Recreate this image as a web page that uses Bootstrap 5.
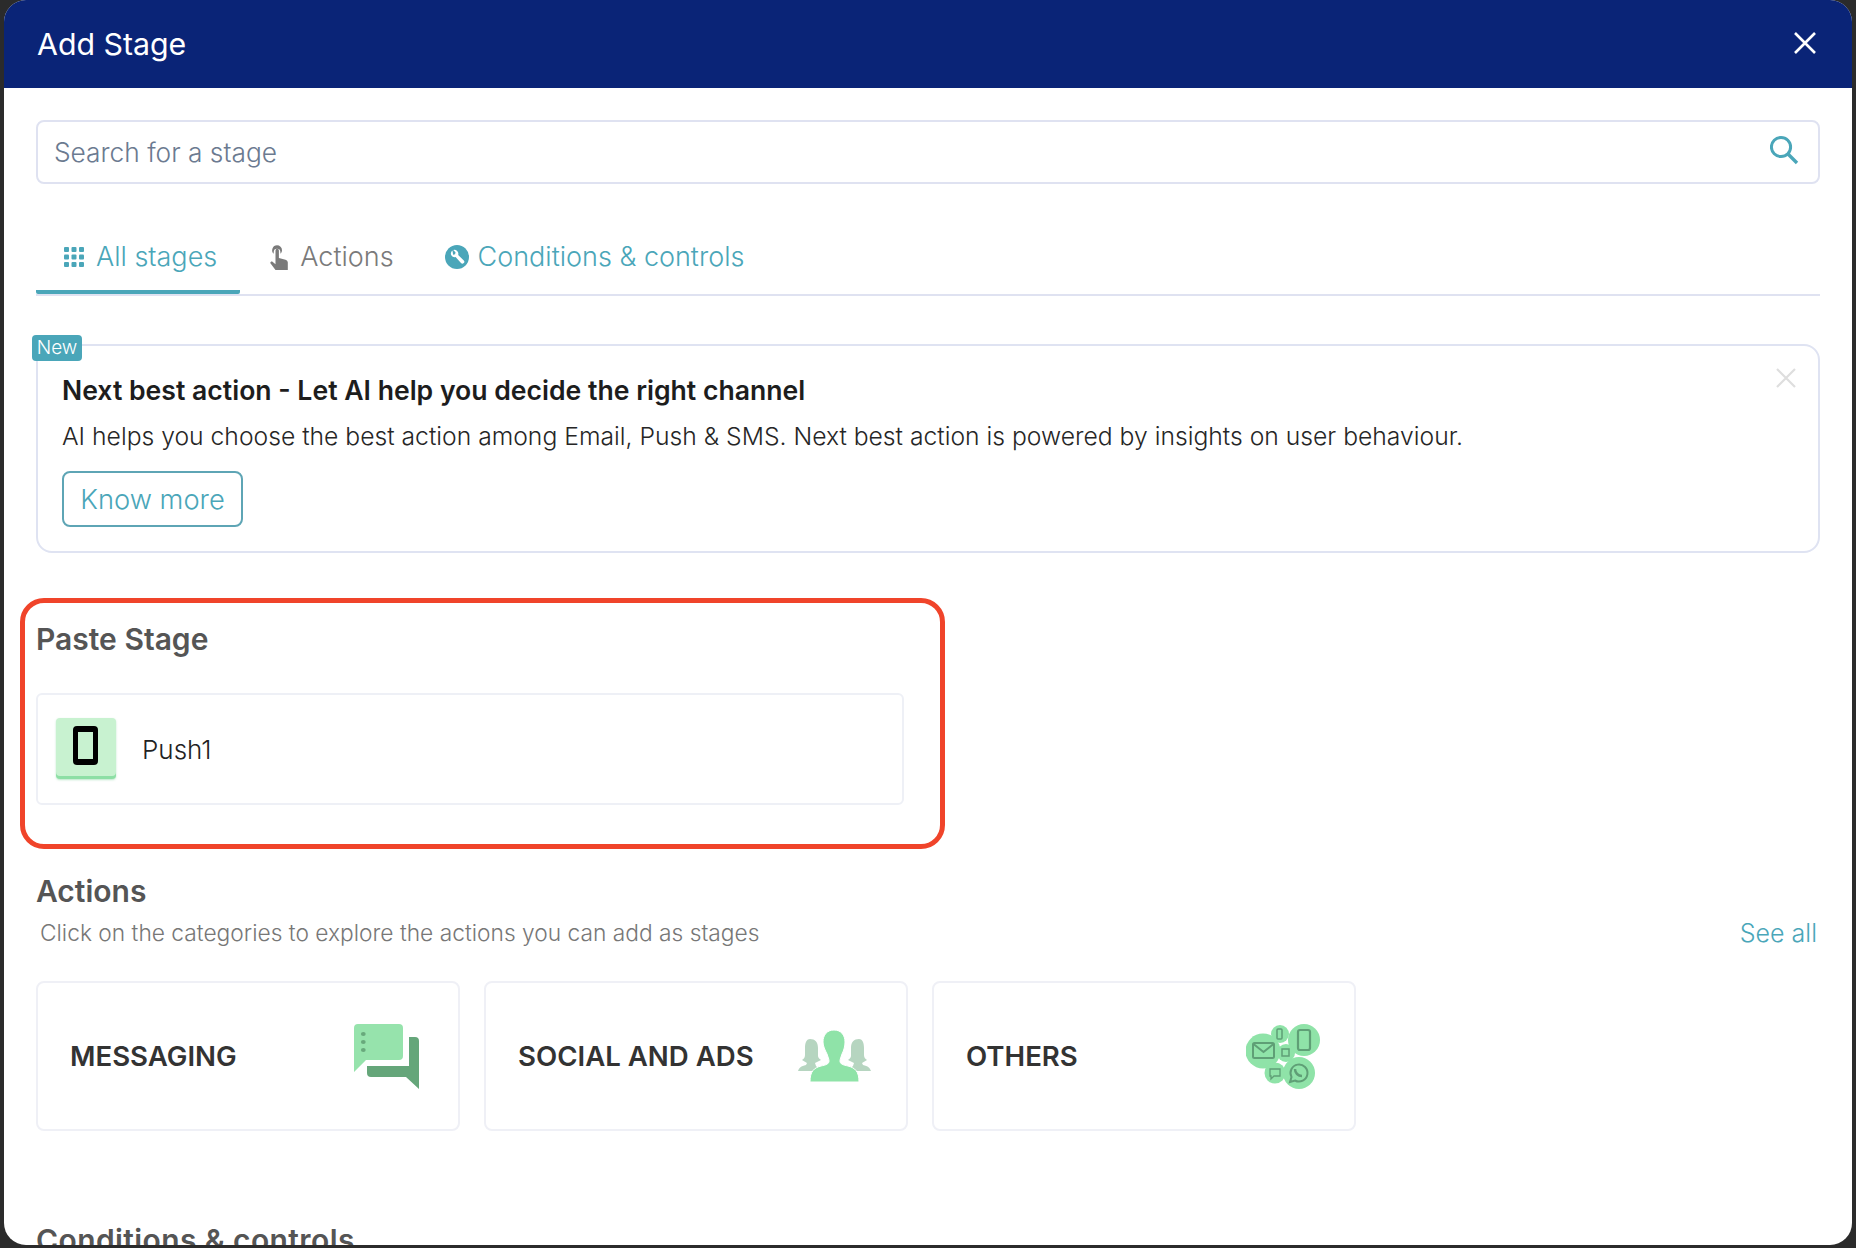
<!DOCTYPE html>
<html lang="en">
<head>
<meta charset="utf-8">
<title>Add Stage</title>
<link href="https://cdn.jsdelivr.net/npm/bootstrap@5.3.0/dist/css/bootstrap.min.css" rel="stylesheet">
<style>
html,body{height:100%}
body{background:#2b2b2b;font-family:"Inter","Liberation Sans",sans-serif;overflow:hidden}
.stage-window{height:1245px;margin:0 4px;background:#fff;border-radius:22px;overflow:hidden}
.stage-head{height:88px;background:#0a2477;color:#fff;padding:0 34px 0 33px}
.stage-head h1{font-size:30.300px;font-weight:400;margin:0}
.stage-close{width:24px;height:24px;padding:0;border:0;background:none;color:#fff;line-height:0;margin:-3px 1px 0 0}
.stage-main{padding:32px 32px 0}
.stage-search{height:64px;border:2px solid #dfe2f1;border-radius:8px;padding:0 18px 0 16px}
.stage-search input{border:0;outline:0;flex:1;font-size:26.300px;font-weight:300;color:#6b7a90;background:none;padding:2px 0 0;font-family:inherit}
.stage-search input::placeholder{color:#6b7a90;opacity:1}
.stage-tabs{margin-top:48px;height:62px;border-bottom:2px solid #dfe2f1;box-sizing:content-box}
.stage-tab{height:62px;display:flex;align-items:center;gap:12px;font-size:27px;font-weight:300;color:#4aa6b9;padding:0 23px 8px 28px;text-decoration:none;border-bottom:4px solid transparent;border-radius:0 0 2px 2px}
.stage-tab.is-on{border-bottom-color:#4aa6b9}
.stage-tab.is-grey{color:#7a7a7a;padding-left:30px;padding-right:30px;gap:12px}
.stage-tab.is-cond{padding-left:21px;gap:9px}
.promo{margin-top:48px;height:209px;border:2px solid #dfe3f2;border-radius:16px;padding:26px 24px 0;position:relative}
.promo-flag{position:absolute;left:-6px;top:-11px;width:50px;height:26px;background:#4aa6b9;color:#fff;font-size:19px;font-weight:300;line-height:26px;text-align:center;border-radius:4px}
.promo-title{font-size:26.600px;font-weight:600;color:#1d1d1d;line-height:36px;margin:0 0 10px}
.promo-text{font-size:24.700px;font-weight:300;color:#262626;line-height:36px;margin:0 0 17px}
.promo-btn{height:56px;width:181px;font-size:27.300px;font-weight:300;color:#4aa6b9;border:2px solid #5ea5b5;border-radius:8px;background:#fff;padding:2px 0 0;font-family:inherit}
.promo-x{position:absolute;right:22px;top:22px;line-height:0}
.paste-zone{margin:45px 0 0 -16px;width:925px;height:251px;border:5px solid #f0442a;border-radius:24px;padding:18px 36px 0 11px}
.zone-title{font-size:30px;font-weight:600;color:#555;line-height:36px;margin:0}
.push-row{margin-top:36px;height:112px;border:2px solid #eef0f6;border-radius:6px;padding:0 18px;gap:26px;font-size:26px;font-weight:300;color:#222}
.push-tile{width:60px;height:61px;background:#c8f2d0;border-radius:4px;box-shadow:inset 0 -3px 0 #8ddfa5,0 1px 2px rgba(120,210,150,.5);margin-top:-1px}
.push-phone{width:25px;height:39px;border:5px solid #000;border-width:6px 5px;border-radius:4px;background:#c8f2d0;margin-top:-6px;margin-left:-2px}
.sect-title{margin-top:24px}
.sect-sub{margin-top:9px;padding:0 3px 0 4px;line-height:30px}
.sect-note{font-size:22.750px;font-weight:300;color:#777}
.sect-all{font-size:25px;font-weight:300;color:#4aa6b9;text-decoration:none}
.cat-row{margin-top:33px;gap:24px}
.cat-box{width:424px;height:150px;border:2px solid #eff0f6;border-radius:8px;padding:0 32px}
.cat-name{font-size:27.600px;font-weight:600;color:#333;padding-top:2px}
.ico-a{margin-right:7px}.ico-b{margin-right:3px}.ico-c{margin-right:2px}
.last-title{margin-top:91px;letter-spacing:.4px}
</style>
</head>
<body>
<div class="stage-window d-flex flex-column">
  <header class="stage-head d-flex align-items-center justify-content-between flex-shrink-0">
    <h1>Add Stage</h1>
    <button class="stage-close" type="button" aria-label="Close"><svg width="24" height="24" viewBox="0 0 24 24"><path d="M2 2l20 20M22 2L2 22" stroke="#fff" stroke-width="2.600" fill="none"/></svg></button>
  </header>
  <main class="stage-main">
    <div class="stage-search d-flex align-items-center">
      <input type="text" placeholder="Search for a stage" aria-label="Search for a stage">
      <svg class="mb-1" width="30" height="30" viewBox="0 0 30 30"><circle cx="11" cy="12" r="9.600" fill="none" stroke="#4aa6b9" stroke-width="3"/><path d="M18 19l9 9" stroke="#4aa6b9" stroke-width="3.400" fill="none"/></svg>
    </div>

    <nav class="stage-tabs d-flex">
      <a class="stage-tab is-on" href="#">
        <svg width="20" height="20" viewBox="0 0 20 20" fill="#4aa6b9"><rect x="0" y="0" width="5" height="5" rx="1"/><rect x="7.500" y="0" width="5" height="5" rx="1"/><rect x="15" y="0" width="5" height="5" rx="1"/><rect x="0" y="7.500" width="5" height="5" rx="1"/><rect x="7.500" y="7.500" width="5" height="5" rx="1"/><rect x="15" y="7.500" width="5" height="5" rx="1"/><rect x="0" y="15" width="5" height="5" rx="1"/><rect x="7.500" y="15" width="5" height="5" rx="1"/><rect x="15" y="15" width="5" height="5" rx="1"/></svg>
        All stages</a>
      <a class="stage-tab is-grey" href="#">
        <svg width="18" height="26" viewBox="0 0 18 26" fill="#7a7a7a"><path d="M7 1.200a5 5 0 0 1 5 5c0 1.500-.6 2.700-1.600 3.600V8.200a3.300 3.300 0 1 0-6.700 0v1.600A5 5 0 0 1 7 1.200z"/><path d="M5.500 6.500a1.700 1.700 0 0 1 3.400 0V14l6.600 1.700c1.400.4 2.300 1.500 2.300 2.900V26H5.500L.6 19.500c-.9-1.200.7-2.700 1.900-1.700l3 2.400z"/></svg>
        Actions</a>
      <a class="stage-tab is-cond" href="#">
        <svg width="24" height="24" viewBox="0 0 24 24"><circle cx="12" cy="12" r="12" fill="#4aa6b9"/><path d="M7.500 5.500a4 4 0 0 0-1.200 4.800 4 4 0 0 0 4.300 1.800l5.400 5.900a1.900 1.900 0 0 0 2.800-2.600l-5.600-5.500a4 4 0 0 0-5-4.900l2.300 2.300-.4 2-2 .5z" fill="#fff"/></svg>
        Conditions &amp; controls</a>
    </nav>

    <section class="promo">
      <span class="promo-flag">New</span>
      <span class="promo-x"><svg width="20" height="20" viewBox="0 0 20 20"><path d="M1 1l18 18M19 1L1 19" stroke="#dedede" stroke-width="2.200" fill="none"/></svg></span>
      <h2 class="promo-title">Next best action - Let AI help you decide the right channel</h2>
      <p class="promo-text">AI helps you choose the best action among Email, Push &amp; SMS. Next best action is powered by insights on user behaviour.</p>
      <button class="promo-btn" type="button">Know more</button>
    </section>

    <section class="paste-zone">
      <h3 class="zone-title">Paste Stage</h3>
      <div class="push-row d-flex align-items-center">
        <div class="push-tile d-flex align-items-center justify-content-center"><div class="push-phone"></div></div>
        <span>Push1</span>
      </div>
    </section>

    <h3 class="zone-title sect-title">Actions</h3>
    <div class="sect-sub d-flex justify-content-between align-items-center">
      <span class="sect-note">Click on the categories to explore the actions you can add as stages</span>
      <a class="sect-all" href="#">See all</a>
    </div>

    <div class="cat-row d-flex">
      <div class="cat-box d-flex align-items-center justify-content-between">
        <span class="cat-name">MESSAGING</span>
        <svg class="ico-a" width="65" height="65" viewBox="0 0 65 65"><path d="M55 13h6a4 4 0 0 1 4 4v48L52 53H17a4 4 0 0 1-4-4v-7h42z" fill="#65a67a"/><path d="M4 0h41a4 4 0 0 1 4 4v28a4 4 0 0 1-4 4H12L0 48V4a4 4 0 0 1 4-4z" fill="#96e3ac"/><g fill="#68a97c"><ellipse cx="9.300" cy="10" rx="2.400" ry="2"/><ellipse cx="9.300" cy="18" rx="2.400" ry="2"/><ellipse cx="9.300" cy="26" rx="2.400" ry="2"/></g></svg>
      </div>
      <div class="cat-box d-flex align-items-center justify-content-between">
        <span class="cat-name">SOCIAL AND ADS</span>
        <svg class="ico-b" width="73" height="52" viewBox="0 0 73 52"><g fill="#b6d5c0"><path d="M12 9c5 0 8 3 8 9v8c0 2 2 3 3 4l-6 3 1 3 5 5H0c1-3 3-5 8-6l1-2-5-3c2-1 3-3 3-5v-7c0-6 2-9 5-9z"/><path d="M61 9c-5 0-8 3-8 9v8c0 2-2 3-3 4l6 3-1 3-5 5h23c-1-3-3-5-8-6l-1-2 5-3c-2-1-3-3-3-5v-7c0-6-2-9-5-9z"/></g><path d="M36 0c7 0 11 5 11 12 0 4-1 8-3 12-1 3-2 5-2 7 0 3 3 4 8 5 7 2 11 5 11 16H12c0-11 4-14 11-16 5-1 8-2 8-5 0-2-1-4-2-7-2-4-4-8-4-12C25 5 29 0 36 0z" fill="#8fe3a8" stroke="#fff" stroke-width="1"/></svg>
      </div>
      <div class="cat-box d-flex align-items-center justify-content-between">
        <span class="cat-name">OTHERS</span>
        <svg class="ico-c" width="74" height="65" viewBox="0 0 74 65"><g fill="#8fe3a8"><circle cx="17" cy="27" r="17.500"/><circle cx="34" cy="10" r="9"/><circle cx="58" cy="16" r="16"/><circle cx="40" cy="29" r="9"/><circle cx="29" cy="49" r="10.500"/><circle cx="53" cy="49" r="16"/></g><g fill="none" stroke="#5f9f76"><rect x="7" y="19" width="21" height="15" rx="1.500" stroke-width="2"/><path d="M7.500 20l10 8 10-8" stroke-width="2"/><rect x="31" y="5" width="5" height="10" rx="1" stroke-width="1.500"/><rect x="52" y="6" width="12" height="20" rx="2" stroke-width="2.200"/><rect x="36" y="25" width="7" height="7" stroke-width="1.500"/><path d="M24 45h10v7h-6l-3 3v-3h-1z" stroke-width="1.300"/><path d="M44 58l1.500-5a8.500 8.500 0 1 1 3.500 3.500z" stroke-width="2"/><path d="M49 45c0 4 3 7 7 7" stroke-width="2.500"/></g></svg>
      </div>
    </div>

    <h3 class="zone-title last-title">Conditions &amp; controls</h3>
  </main>
</div>
<script src="https://cdn.jsdelivr.net/npm/bootstrap@5.3.0/dist/js/bootstrap.bundle.min.js"></script>
</body>
</html>
